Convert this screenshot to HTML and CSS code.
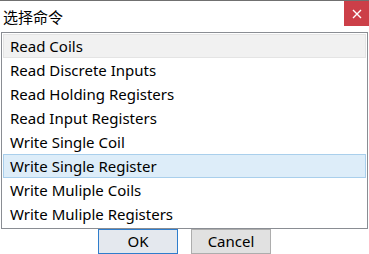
FILE: index.html
```html
<!DOCTYPE html>
<html>
<head>
<meta charset="utf-8">
<link rel="stylesheet" href="styles.css">
</head>
<body>
<div class="window">
  <div class="titlebar">
    <span class="title">选择命令</span>
    <button class="close" aria-label="关闭">
      <svg width="10" height="10" viewBox="0 0 10 10"><path d="M1 1 L9 9 M9 1 L1 9" stroke="#fff" stroke-width="1.4" fill="none"/></svg>
    </button>
  </div>
  <div class="list">
    <div class="item focus">Read Coils</div>
    <div class="item">Read Discrete Inputs</div>
    <div class="item">Read Holding Registers</div>
    <div class="item">Read Input Registers</div>
    <div class="item">Write Single Coil</div>
    <div class="item hover">Write Single Register</div>
    <div class="item">Write Muliple Coils</div>
    <div class="item">Write Muliple Registers</div>
  </div>
  <div class="buttons">
    <button class="btn default">OK</button>
    <button class="btn">Cancel</button>
  </div>
</div>
</body>
</html>
```

FILE: styles.css
```css
html, body {
  margin: 0;
  padding: 0;
  background: #fff;
}
.window {
  width: 369px;
  height: 254px;
  overflow: hidden;
  border-top: 1px solid #707070;
  box-sizing: border-box;
  background: #fff;
  font-family: "Noto Sans", "Noto Sans CJK SC", sans-serif;
  color: #000;
}
.titlebar {
  height: 31px;
  display: flex;
  align-items: flex-start;
  justify-content: space-between;
}
.title {
  font-family: "Noto Sans CJK SC", sans-serif;
  font-size: 15px;
  line-height: 31px;
  padding-left: 3px;
}
.close {
  width: 25px;
  height: 25px;
  border: 0;
  padding: 0;
  margin: 0;
  background: #cc3f48;
  display: flex;
  align-items: center;
  justify-content: center;
}
.list {
  margin-left: 1px;
  width: 367px;
  height: 197px;
  box-sizing: border-box;
  border: 1px solid #8a8d93;
  padding-top: 1px;
}
.item {
  height: 24px;
  margin: 0 1px;
  box-sizing: border-box;
  border: 1px solid transparent;
  padding-left: 6px;
  font-size: 15px;
  line-height: 23px;
  white-space: nowrap;
}
.item.focus {
  background: #f1f1f1;
  border-color: #e4e4e4;
}
.item.hover {
  background: #ddedf9;
  border-color: #a9cfec;
}
.buttons {
  display: flex;
  justify-content: center;
  gap: 13px;
}
.btn {
  width: 80px;
  height: 25px;
  margin: 0;
  padding: 0;
  box-sizing: border-box;
  border: 1px solid #adadad;
  background: #e1e1e1;
  font-family: "Noto Sans", sans-serif;
  font-size: 15px;
  line-height: 23px;
  color: #000;
}
.btn.default {
  border-color: #2f7dcc;
  background: #e4e8ee;
}
```
